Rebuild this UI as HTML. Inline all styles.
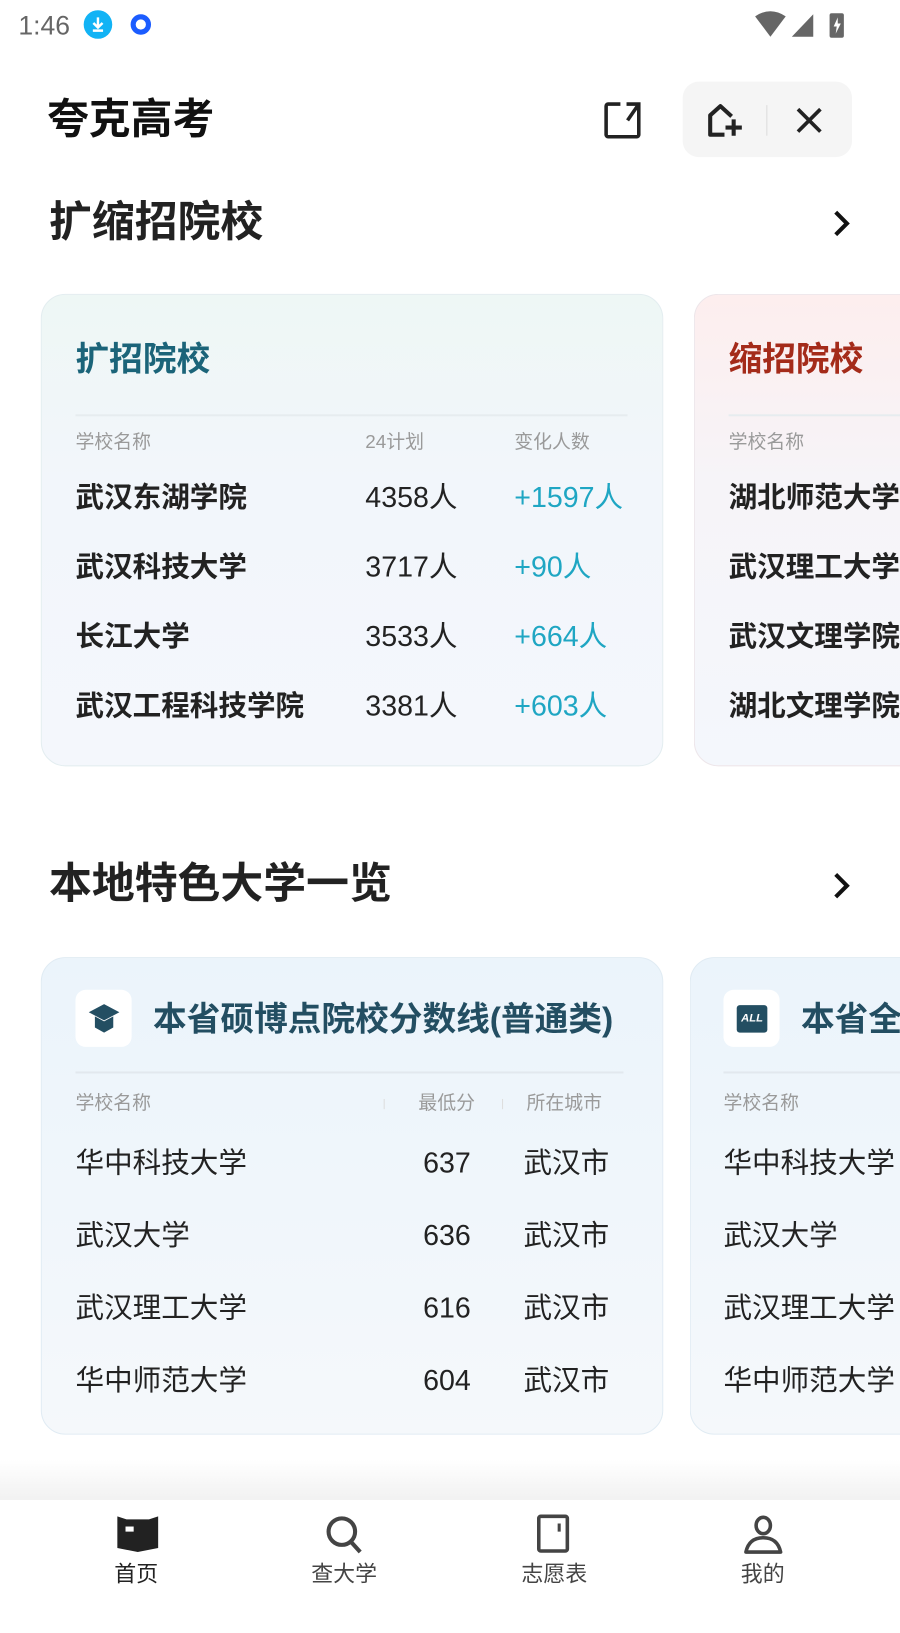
<!DOCTYPE html>
<html><head><meta charset="utf-8"><style>
*{margin:0;padding:0;box-sizing:border-box}
body{width:900px;height:1600px;overflow:hidden;background:#fff;position:relative;font-family:"Liberation Sans","Noto Sans CJK SC",sans-serif;color:#222}
#w{position:absolute;left:0;top:0;width:882px;height:1568px;transform:scale(1.0204);transform-origin:0 0}
.a{position:absolute;white-space:nowrap}
.card{position:absolute;border-radius:24px;overflow:hidden}
.t{line-height:1}
.c{text-align:center;width:60px}
</style></head><body><div id="w">
<!-- status bar -->
<div class="a" style="left:18px;top:10px;font-size:26px;color:#666">1:46</div>
<div class="a" style="left:82px;top:10px;width:28px;height:28px;border-radius:50%;background:#12b3f5"><svg width="28" height="28" viewBox="0 0 28 28"><path d="M14 7v10M9.5 12.5L14 17l4.5-4.5M9 20h10" stroke="#fff" stroke-width="2.4" fill="none"/></svg></div>
<div class="a" style="left:128px;top:14px;width:20px;height:20px;border-radius:50%;border:5px solid #1b5cff"></div>
<svg class="a" style="left:740px;top:10px" width="90" height="28" viewBox="0 0 90 28"><path d="M0 6Q15 -4 30 6L15 26Z" fill="#666"/><path d="M57 4V26H36Z" fill="#666"/><rect x="73" y="3" width="14" height="24" rx="2" fill="#666"/><path d="M81 7l-4 9h3l-1 7 5-10h-3z" fill="#fff"/></svg>

<!-- header -->
<div class="a t" style="left:46px;top:97px;font-size:41px;font-weight:bold;color:#111">夸克高考</div>
<svg class="a" style="left:590px;top:98px" width="40" height="40" viewBox="0 0 40 40"><path d="M24 4H36V34A2 2 0 0 1 34 36H6A2 2 0 0 1 4 34V6A2 2 0 0 1 6 4H18" stroke="#222" stroke-width="3.5" fill="none"/><path d="M36 4L25 20" stroke="#222" stroke-width="3.5"/></svg>
<div class="a" style="left:669px;top:80px;width:166px;height:74px;background:#f5f5f5;border-radius:16px"></div>
<svg class="a" style="left:690px;top:100px" width="44" height="36" viewBox="0 0 44 36"><path d="M20 32H6V13L16 4L27 14" stroke="#222" stroke-width="4" fill="none" stroke-linejoin="round"/><path d="M29 17V33M21 25H37" stroke="#222" stroke-width="4"/></svg>
<div class="a" style="left:751px;top:103px;width:1px;height:30px;background:#ddd"></div>
<svg class="a" style="left:779px;top:104px" width="28" height="28" viewBox="0 0 28 28"><path d="M3 3L25 25M25 3L3 25" stroke="#222" stroke-width="3.6"/></svg>

<!-- section 1 -->
<div class="a t" style="left:48px;top:197px;font-size:42px;font-weight:bold;color:#222">扩缩招院校</div>
<svg class="a" style="left:814px;top:205px" width="22" height="28" viewBox="0 0 22 28"><path d="M5 3L16 14L5 25" stroke="#111" stroke-width="4" fill="none"/></svg>

<div class="card" style="left:40px;top:288px;width:610px;height:463px;background:linear-gradient(180deg,#eef7f5 0%,#f2f6fb 40%,#f4f7fc 100%);border:1px solid #e3edf0"></div>
<div class="a t" style="left:74px;top:335px;font-size:33px;font-weight:bold;color:#1b6479">扩招院校</div>
<div class="a" style="left:74px;top:406px;width:541px;height:2px;background:#e6ecef"></div>
<div class="a t" style="left:74px;top:424px;font-size:18.5px;color:#9a9a9a">学校名称</div>
<div class="a t" style="left:358px;top:424px;font-size:18.5px;color:#9a9a9a">24计划</div>
<div class="a t" style="left:504px;top:424px;font-size:18.5px;color:#9a9a9a">变化人数</div>
<div style="font-size:28px">
<div class="a t" style="left:74px;top:474px;font-weight:bold">武汉东湖学院</div><div class="a t" style="left:358px;top:474px">4358人</div><div class="a t" style="left:504px;top:474px;color:#1fa6c3">+1597人</div>
<div class="a t" style="left:74px;top:542px;font-weight:bold">武汉科技大学</div><div class="a t" style="left:358px;top:542px">3717人</div><div class="a t" style="left:504px;top:542px;color:#1fa6c3">+90人</div>
<div class="a t" style="left:74px;top:610px;font-weight:bold">长江大学</div><div class="a t" style="left:358px;top:610px">3533人</div><div class="a t" style="left:504px;top:610px;color:#1fa6c3">+664人</div>
<div class="a t" style="left:74px;top:678px;font-weight:bold">武汉工程科技学院</div><div class="a t" style="left:358px;top:678px">3381人</div><div class="a t" style="left:504px;top:678px;color:#1fa6c3">+603人</div>
</div>

<div class="card" style="left:680px;top:288px;width:400px;height:463px;background:linear-gradient(180deg,#fdeeee 0%,#f6f4f8 40%,#f4f7fc 100%);border:1px solid #ede6ea"></div>
<div class="a t" style="left:714px;top:335px;font-size:33px;font-weight:bold;color:#a42b1a">缩招院校</div>
<div class="a" style="left:714px;top:406px;width:200px;height:2px;background:#e6ecef"></div>
<div class="a t" style="left:714px;top:424px;font-size:18.5px;color:#9a9a9a">学校名称</div>
<div style="font-size:28px;font-weight:bold">
<div class="a t" style="left:714px;top:474px">湖北师范大学</div>
<div class="a t" style="left:714px;top:542px">武汉理工大学</div>
<div class="a t" style="left:714px;top:610px">武汉文理学院</div>
<div class="a t" style="left:714px;top:678px">湖北文理学院</div>
</div>

<!-- section 2 -->
<div class="a t" style="left:48px;top:845px;font-size:42px;font-weight:bold;color:#222">本地特色大学一览</div>
<svg class="a" style="left:814px;top:854px" width="22" height="28" viewBox="0 0 22 28"><path d="M5 3L16 14L5 25" stroke="#111" stroke-width="4" fill="none"/></svg>

<div class="card" style="left:40px;top:938px;width:610px;height:468px;background:linear-gradient(180deg,#ebf4fb 0%,#f0f6fb 50%,#f5f8fb 100%);border:1px solid #e0ebf3"></div>
<div class="a" style="left:74px;top:970px;width:55px;height:56px;background:#fff;border-radius:10px"></div>
<svg class="a" style="left:86px;top:983px" width="32" height="30" viewBox="0 0 32 30"><path d="M16 1L31 9L16 17L1 9Z" fill="#234e62"/><path d="M7 13V24L16 29L25 24V13L16 18Z" fill="#234e62"/></svg>
<div class="a t" style="left:150px;top:982px;font-size:33px;font-weight:bold;color:#234e62">本省硕博点院校分数线(普通类)</div>
<div class="a" style="left:74px;top:1050px;width:537px;height:2px;background:#e2e8ee"></div>
<div class="a t" style="left:74px;top:1072px;font-size:18.5px;color:#9a9a9a">学校名称</div>
<div class="a t" style="left:410px;top:1072px;font-size:18.5px;color:#9a9a9a">最低分</div>
<div class="a t" style="left:516px;top:1072px;font-size:18.5px;color:#9a9a9a">所在城市</div>
<div class="a" style="left:376px;top:1077px;width:1px;height:10px;background:#ddd"></div>
<div class="a" style="left:492px;top:1077px;width:1px;height:10px;background:#ddd"></div>
<div style="font-size:28px;color:#222">
<div class="a t" style="left:74px;top:1126px">华中科技大学</div><div class="a t c" style="left:408px;top:1126px">637</div><div class="a t" style="left:513px;top:1126px">武汉市</div>
<div class="a t" style="left:74px;top:1197px">武汉大学</div><div class="a t c" style="left:408px;top:1197px">636</div><div class="a t" style="left:513px;top:1197px">武汉市</div>
<div class="a t" style="left:74px;top:1268px">武汉理工大学</div><div class="a t c" style="left:408px;top:1268px">616</div><div class="a t" style="left:513px;top:1268px">武汉市</div>
<div class="a t" style="left:74px;top:1339px">华中师范大学</div><div class="a t c" style="left:408px;top:1339px">604</div><div class="a t" style="left:513px;top:1339px">武汉市</div>
</div>

<div class="card" style="left:676px;top:938px;width:400px;height:468px;background:linear-gradient(180deg,#ebf4fb 0%,#f0f6fb 50%,#f5f8fb 100%);border:1px solid #e0ebf3"></div>
<div class="a" style="left:709px;top:970px;width:55px;height:56px;background:#fff;border-radius:10px"></div>
<div class="a" style="left:722px;top:985px;width:30px;height:27px;background:#234e62;border-radius:3px;color:#fff;font-size:11px;font-weight:bold;font-style:italic;text-align:center;line-height:27px">ALL</div>
<div class="a t" style="left:785px;top:982px;font-size:33px;font-weight:bold;color:#234e62">本省全</div>
<div class="a" style="left:709px;top:1050px;width:200px;height:2px;background:#e2e8ee"></div>
<div class="a t" style="left:709px;top:1072px;font-size:18.5px;color:#9a9a9a">学校名称</div>
<div style="font-size:28px;color:#222">
<div class="a t" style="left:709px;top:1126px">华中科技大学</div>
<div class="a t" style="left:709px;top:1197px">武汉大学</div>
<div class="a t" style="left:709px;top:1268px">武汉理工大学</div>
<div class="a t" style="left:709px;top:1339px">华中师范大学</div>
</div>

<!-- bottom nav -->
<div class="a" style="left:0;top:1430px;width:900px;height:40px;background:linear-gradient(180deg,rgba(240,240,240,0),rgba(238,238,238,0.8))"></div>
<div class="a" style="left:0;top:1470px;width:900px;height:130px;background:#fff"></div>
<svg class="a" style="left:114px;top:1484px" width="42" height="38" viewBox="0 0 42 38"><path d="M1 2L10 5H32L41 2V33L21 37L1 33Z" fill="#222"/><rect x="9" y="12" width="8" height="5" fill="#fff"/></svg>
<svg class="a" style="left:318px;top:1484px" width="40" height="40" viewBox="0 0 40 40"><circle cx="17" cy="17" r="13" stroke="#444" stroke-width="4" fill="none"/><path d="M26 27L35 37" stroke="#444" stroke-width="4"/></svg>
<svg class="a" style="left:526px;top:1484px" width="34" height="40" viewBox="0 0 34 40"><rect x="2" y="2" width="28" height="34" rx="2" stroke="#444" stroke-width="3.5" fill="none"/><path d="M22 9V17" stroke="#444" stroke-width="3"/></svg>
<svg class="a" style="left:728px;top:1484px" width="40" height="40" viewBox="0 0 40 40"><ellipse cx="20" cy="11" rx="7" ry="8" stroke="#444" stroke-width="3.5" fill="none"/><path d="M3 37Q6 23 20 23Q34 23 37 37Z" stroke="#444" stroke-width="3.5" fill="none" stroke-linejoin="round"/></svg>
<div class="a t" style="left:112px;top:1533px;font-size:21.5px;color:#222">首页</div>
<div class="a t" style="left:305px;top:1533px;font-size:21.5px;color:#444">查大学</div>
<div class="a t" style="left:511px;top:1533px;font-size:21.5px;color:#444">志愿表</div>
<div class="a t" style="left:726px;top:1533px;font-size:21.5px;color:#444">我的</div>
</div></body></html>
